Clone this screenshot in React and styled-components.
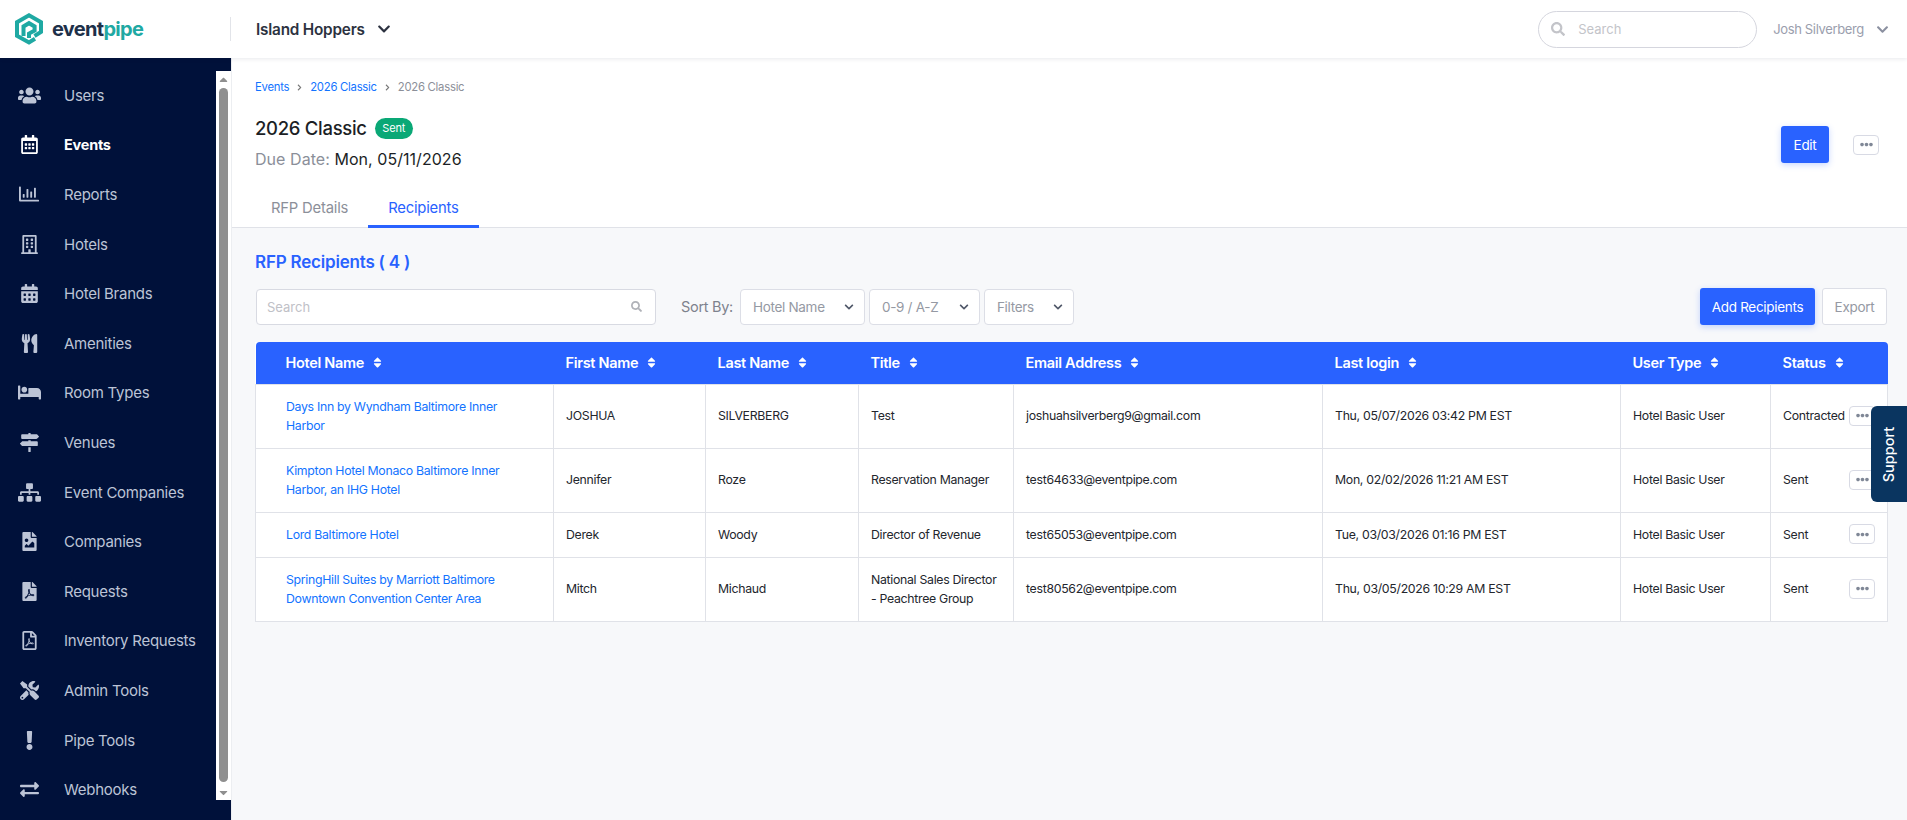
import React from "react";
import styled, { createGlobalStyle } from "styled-components";
import {
  FaUsers, FaRegCalendarAlt, FaRegChartBar, FaRegBuilding, FaCalendarAlt, FaUtensils, FaBed, FaMapSigns,
  FaSitemap, FaFileImage, FaFilePdf, FaRegFilePdf, FaTools, FaExclamation, FaExchangeAlt, FaSearch,
  FaChevronDown, FaSort, FaEllipsisH, FaChevronRight, FaCaretUp, FaCaretDown,
} from "react-icons/fa";

const FONT = `Inter, "Noto Sans", "Liberation Sans", sans-serif`;
const BLUE = "#2962ff";
const LINK = "#1273ff";
const LINE = "#e0e2e8";

const Global = createGlobalStyle`
  html, body { margin: 0; padding: 0; height: 100%; background: #fff; }
  body { font-family: ${FONT}; overflow: hidden; }
  * { box-sizing: border-box; }
`;

const Page = styled.div`
  width: 100vw; height: 100vh; display: flex; flex-direction: column; overflow: hidden;
`;

const Header = styled.header`
  height: 58px; flex: none; display: flex; align-items: center; background: #fff;
  position: relative; z-index: 2; box-shadow: 0 1px 4px rgba(30, 40, 70, 0.1);
`;
const LogoBox = styled.div`
  width: 231px; height: 24px; padding-left: 15px; display: flex; align-items: center; gap: 9px;
  border-right: 1px solid #e2e4e9;
`;
const LogoText = styled.div`
  font-size: 20px; font-weight: 700; color: #1d3049; letter-spacing: -0.7px;
  span { color: #1fa9a3; }
`;
const Org = styled.div`
  margin-left: 25px; display: flex; align-items: center; gap: 12px;
  font-size: 15.3px; font-weight: 600; color: #2c3240; letter-spacing: -0.2px;
`;
const HeaderRight = styled.div`
  margin-left: auto; display: flex; align-items: center; padding-right: 18px;
`;
const TopSearch = styled.div`
  width: 219px; height: 37px; border: 1px solid #d5d6de; border-radius: 19px; display: flex;
  align-items: center; gap: 13px; padding-left: 12px; color: #c3c4c9; font-size: 13px;
`;
const UserName = styled.div`
  margin-left: 16px; margin-right: 12px; font-size: 13px; color: #9a9ead; letter-spacing: -0.35px;
`;

const Body = styled.div`
  flex: 1; display: flex; min-height: 0;
`;
const Sidebar = styled.aside`
  width: 231px; flex: none; background: #00113a; display: flex; padding: 13px 0 20px;
`;
const NavList = styled.nav`
  flex: 1; display: flex; flex-direction: column; margin-top: -0.5px;
`;
const NavItem = styled.div`
  height: 49.6px; flex: none; display: flex; align-items: center;
  color: ${(p) => (p.$active ? "#fff" : "#bcc4d6")};
  font-size: ${(p) => (p.$active ? 14.5 : 15)}px; font-weight: ${(p) => (p.$active ? 700 : 400)}; letter-spacing: -0.25px;
`;
const NavIcon = styled.span`
  width: 64px; flex: none; display: flex; justify-content: center; padding-right: 6px; font-size: ${(p) => p.$size || 19}px;
`;
const ScrollTrack = styled.div`
  width: 15px; flex: none; background: #fff; display: flex; flex-direction: column; align-items: center;
  color: #8f8f8f; font-size: 13px;
`;
const ScrollThumb = styled.div`
  flex: 1; width: 9px; background: #8f8f8f; border-radius: 5px; margin: 1px 0 2px;
`;
const ScrollArrow = styled.div`
  height: 16px; display: flex; align-items: center; justify-content: center;
`;

const Main = styled.main`
  flex: 1; min-width: 0; display: flex; flex-direction: column; background: #f7f8fa; border-left: 1px solid #eceef1;
`;
const Top = styled.section`
  background: #fff; height: 170px; flex: none; display: flex; flex-direction: column; border-bottom: 1px solid ${LINE};
`;
const Crumbs = styled.div`
  margin: 20px 0 0 23px; height: 18px; display: flex; align-items: center; gap: 7px; font-size: 11.3px;
  color: #8c8f99; letter-spacing: -0.25px;
  a { color: ${LINK}; }
  svg { font-size: 7px; color: #777; }
`;
const TitleRow = styled.div`
  display: flex; align-items: flex-start; justify-content: space-between; padding: 18px 28px 0 23px;
`;
const TitleLine = styled.div`
  display: flex; align-items: center; gap: 8px; height: 28px;
`;
const Title = styled.h1`
  margin: 0; font-size: 18.5px; font-weight: 500; color: #1c1f26; letter-spacing: -0.3px;
`;
const Badge = styled.span`
  background: #0aa876; color: #fff; font-size: 11px; height: 21px; width: 38px; border-radius: 11px;
  display: flex; align-items: center; justify-content: center; letter-spacing: -0.2px;
`;
const Due = styled.div`
  margin-top: 7px; font-size: 16px; line-height: 20px; color: #8b8f99; letter-spacing: 0.05px;
  b { font-weight: 400; color: #1c1f26; }
`;
const Actions = styled.div`
  display: flex; align-items: center; gap: 24px; margin-top: 12px;
`;
const PrimaryBtn = styled.button`
  height: 37px; width: ${(p) => p.$w}px; border: 0; border-radius: 3px; background: ${BLUE}; color: #fff;
  font: 400 13.5px ${FONT}; letter-spacing: -0.3px; box-shadow: 0 2px 6px rgba(41, 98, 255, 0.25); padding: 0;
`;
const MoreBtn = styled.button`
  width: 26px; height: 20px; border: 1px solid #d8dae4; border-radius: 4px; background: #fff; padding: 0;
  color: #7f8796; display: flex; align-items: center; justify-content: center; font-size: 13px; flex: none;
`;
const Tabs = styled.div`
  margin-top: auto; margin-left: 19px; display: flex;
`;
const Tab = styled.div`
  height: 37px; padding: 0 20px; display: flex; align-items: center; font-size: 14.8px; letter-spacing: -0.2px;
  color: ${(p) => (p.$active ? BLUE : "#8c8f99")};
  border-bottom: 3px solid ${(p) => (p.$active ? BLUE : "transparent")};
  margin-bottom: -1px;
`;

const Content = styled.section`
  padding: 24px 20px 0 23px; display: flex; flex-direction: column;
`;
const Heading = styled.h2`
  margin: 0; font-size: 17px; line-height: 20px; font-weight: 600; color: ${BLUE}; letter-spacing: -0.2px;
`;
const Toolbar = styled.div`
  margin-top: 16px; height: 37px; display: flex; align-items: center;
`;
const SearchBox = styled.div`
  width: 400px; height: 36px; margin-left: 1px; background: #fff; border: 1px solid #d8dae2; border-radius: 4px;
  display: flex; align-items: center; justify-content: space-between; padding: 0 13px 0 10px;
  color: #bfc1c7; font-size: 13px; svg { font-size: 11px; color: #b0b2b8; }
`;
const SortLabel = styled.span`
  margin-left: 25px; margin-right: 7px; font-size: 14.5px; color: #7e828d; letter-spacing: -0.3px;
`;
const Select = styled.div`
  width: ${(p) => p.$w}px; height: 36px; margin-right: 4px; background: #fff; border: 1px solid #dcdee6; border-radius: 4px;
  display: flex; align-items: center; justify-content: space-between; padding: 0 10px 0 12px;
  color: #9599a3; font-size: 13.5px; letter-spacing: -0.3px; svg { font-size: 10px; color: #4f5768; }
`;
const ToolbarEnd = styled.div`
  margin-left: auto; display: flex; gap: 7px;
`;
const GhostBtn = styled.button`
  width: 65px; height: 37px; border: 1px solid #dcdee6; border-radius: 3px; background: #fff; color: #9599a3;
  font: 400 13.5px ${FONT}; letter-spacing: -0.3px; padding: 0;
`;

const Table = styled.table`
  margin-top: 17px; width: 1632px; table-layout: fixed; border-collapse: collapse; background: #fff;
  font-size: 12.3px; color: #23262d; letter-spacing: -0.3px;
`;
const Th = styled.th`
  height: 42px; background: ${BLUE}; color: #fff; text-align: left; font-size: 14.5px; font-weight: 600; letter-spacing: -0.3px;
  padding: 0 0 0 ${(p) => p.$pad}px;
  &:first-child { border-top-left-radius: 4px; }
  &:last-child { border-top-right-radius: 4px; }
  svg { font-size: 13px; margin-left: 7px; vertical-align: -1px; }
`;
const Td = styled.td`
  border: 1px solid ${LINE}; line-height: 19px; padding: 12px ${(p) => p.$padR ?? 8}px 13px ${(p) => p.$pad || 12}px;
`;
const HotelLink = styled.a`
  color: ${LINK};
`;
const StatusWrap = styled.div`
  height: 19px; display: flex; align-items: center; justify-content: space-between; white-space: nowrap;
`;
const Support = styled.div`
  position: fixed; right: 0; top: 406px; width: 36px; height: 96px; background: #0a3560; color: #fff;
  border-radius: 6px 0 0 6px; display: flex; align-items: center; justify-content: center;
  font-size: 14.5px; font-weight: 500; z-index: 5;
  span { transform: rotate(-90deg); white-space: nowrap; }
`;

const Logo = () => (
  <svg width="28" height="32" viewBox="0 0 28 32" fill="none" stroke="#1fa9a3" strokeWidth="4">
    <path d="M20 25.8 14 29.5 2 22.8V9.2L14 2.3 26 9.2V19L19.5 23" />
    <path d="M8.5 23V13.5L14 10.2 19.6 13.5V17.5L14 20.6V25" />
  </svg>
);

const NAV = [
  ["Users", FaUsers, 23], ["Events", FaRegCalendarAlt, 19, true], ["Reports", FaRegChartBar, 20], ["Hotels", FaRegBuilding, 19],
  ["Hotel Brands", FaCalendarAlt, 19], ["Amenities", FaUtensils, 19], ["Room Types", FaBed, 23], ["Venues", FaMapSigns, 19],
  ["Event Companies", FaSitemap, 23], ["Companies", FaFileImage, 19], ["Requests", FaFilePdf, 19], ["Inventory Requests", FaRegFilePdf, 19],
  ["Admin Tools", FaTools, 19], ["Pipe Tools", FaExclamation, 19], ["Webhooks", FaExchangeAlt, 19],
];

const COLS = [298, 152, 153, 155, 309, 298, 150, 117];
const HEAD = ["Hotel Name", "First Name", "Last Name", "Title", "Email Address", "Last login", "User Type", "Status"];
const ROWS = [
  ["Days Inn by Wyndham Baltimore Inner Harbor", "JOSHUA", "SILVERBERG", "Test", "joshuahsilverberg9@gmail.com", "Thu, 05/07/2026 03:42 PM EST", "Contracted"],
  ["Kimpton Hotel Monaco Baltimore Inner Harbor, an IHG Hotel", "Jennifer", "Roze", "Reservation Manager", "test64633@eventpipe.com", "Mon, 02/02/2026 11:21 AM EST", "Sent"],
  ["Lord Baltimore Hotel", "Derek", "Woody", "Director of Revenue", "test65053@eventpipe.com", "Tue, 03/03/2026 01:16 PM EST", "Sent"],
  ["SpringHill Suites by Marriott Baltimore Downtown Convention Center Area", "Mitch", "Michaud", <>National Sales Director<br />- Peachtree Group</>, "test80562@eventpipe.com", "Thu, 03/05/2026 10:29 AM EST", "Sent"],
];

export default function App() {
  return (
    <Page>
      <Global />
      <Header>
        <LogoBox>
          <Logo />
          <LogoText>event<span>pipe</span></LogoText>
        </LogoBox>
        <Org>Island Hoppers <FaChevronDown size={14} /></Org>
        <HeaderRight>
          <TopSearch><FaSearch size={14} />Search</TopSearch>
          <UserName>Josh Silverberg</UserName>
          <FaChevronDown size={13} color="#8b90a0" />
        </HeaderRight>
      </Header>
      <Body>
        <Sidebar>
          <NavList>
            {NAV.map(([label, Icon, size, active]) => (
              <NavItem key={label} $active={active}>
                <NavIcon $size={size}><Icon /></NavIcon>
                {label}
              </NavItem>
            ))}
          </NavList>
          <ScrollTrack>
            <ScrollArrow><FaCaretUp /></ScrollArrow>
            <ScrollThumb />
            <ScrollArrow><FaCaretDown /></ScrollArrow>
          </ScrollTrack>
        </Sidebar>
        <Main>
          <Top>
            <Crumbs>
              <a>Events</a><FaChevronRight /><a>2026 Classic</a><FaChevronRight /><span>2026 Classic</span>
            </Crumbs>
            <TitleRow>
              <div>
                <TitleLine><Title>2026 Classic</Title><Badge>Sent</Badge></TitleLine>
                <Due>Due Date: <b>Mon, 05/11/2026</b></Due>
              </div>
              <Actions>
                <PrimaryBtn $w={48}>Edit</PrimaryBtn>
                <MoreBtn><FaEllipsisH /></MoreBtn>
              </Actions>
            </TitleRow>
            <Tabs>
              <Tab>RFP Details</Tab>
              <Tab $active>Recipients</Tab>
            </Tabs>
          </Top>
          <Content>
            <Heading>RFP Recipients ( 4 )</Heading>
            <Toolbar>
              <SearchBox>Search<FaSearch /></SearchBox>
              <SortLabel>Sort By:</SortLabel>
              <Select $w={125}>Hotel Name<FaChevronDown /></Select>
              <Select $w={111}>0-9 / A-Z<FaChevronDown /></Select>
              <Select $w={90}>Filters<FaChevronDown /></Select>
              <ToolbarEnd>
                <PrimaryBtn $w={115}>Add Recipients</PrimaryBtn>
                <GhostBtn>Export</GhostBtn>
              </ToolbarEnd>
            </Toolbar>
            <Table>
              <colgroup>{COLS.map((w, i) => <col key={i} width={w} />)}</colgroup>
              <thead>
                <tr>
                  {HEAD.map((h, i) => <Th key={h} $pad={i === 0 ? 30 : 12}>{h}<FaSort /></Th>)}
                </tr>
              </thead>
              <tbody>
                {ROWS.map((r) => (
                  <tr key={r[0]}>
                    <Td $pad={30} $padR={30}><HotelLink>{r[0]}</HotelLink></Td>
                    <Td>{r[1]}</Td>
                    <Td>{r[2]}</Td>
                    <Td $padR={6}>{r[3]}</Td>
                    <Td>{r[4]}</Td>
                    <Td>{r[5]}</Td>
                    <Td>Hotel Basic User</Td>
                    <Td $padR={12}><StatusWrap>{r[6]}<MoreBtn><FaEllipsisH /></MoreBtn></StatusWrap></Td>
                  </tr>
                ))}
              </tbody>
            </Table>
          </Content>
        </Main>
      </Body>
      <Support><span>Support</span></Support>
    </Page>
  );
}
